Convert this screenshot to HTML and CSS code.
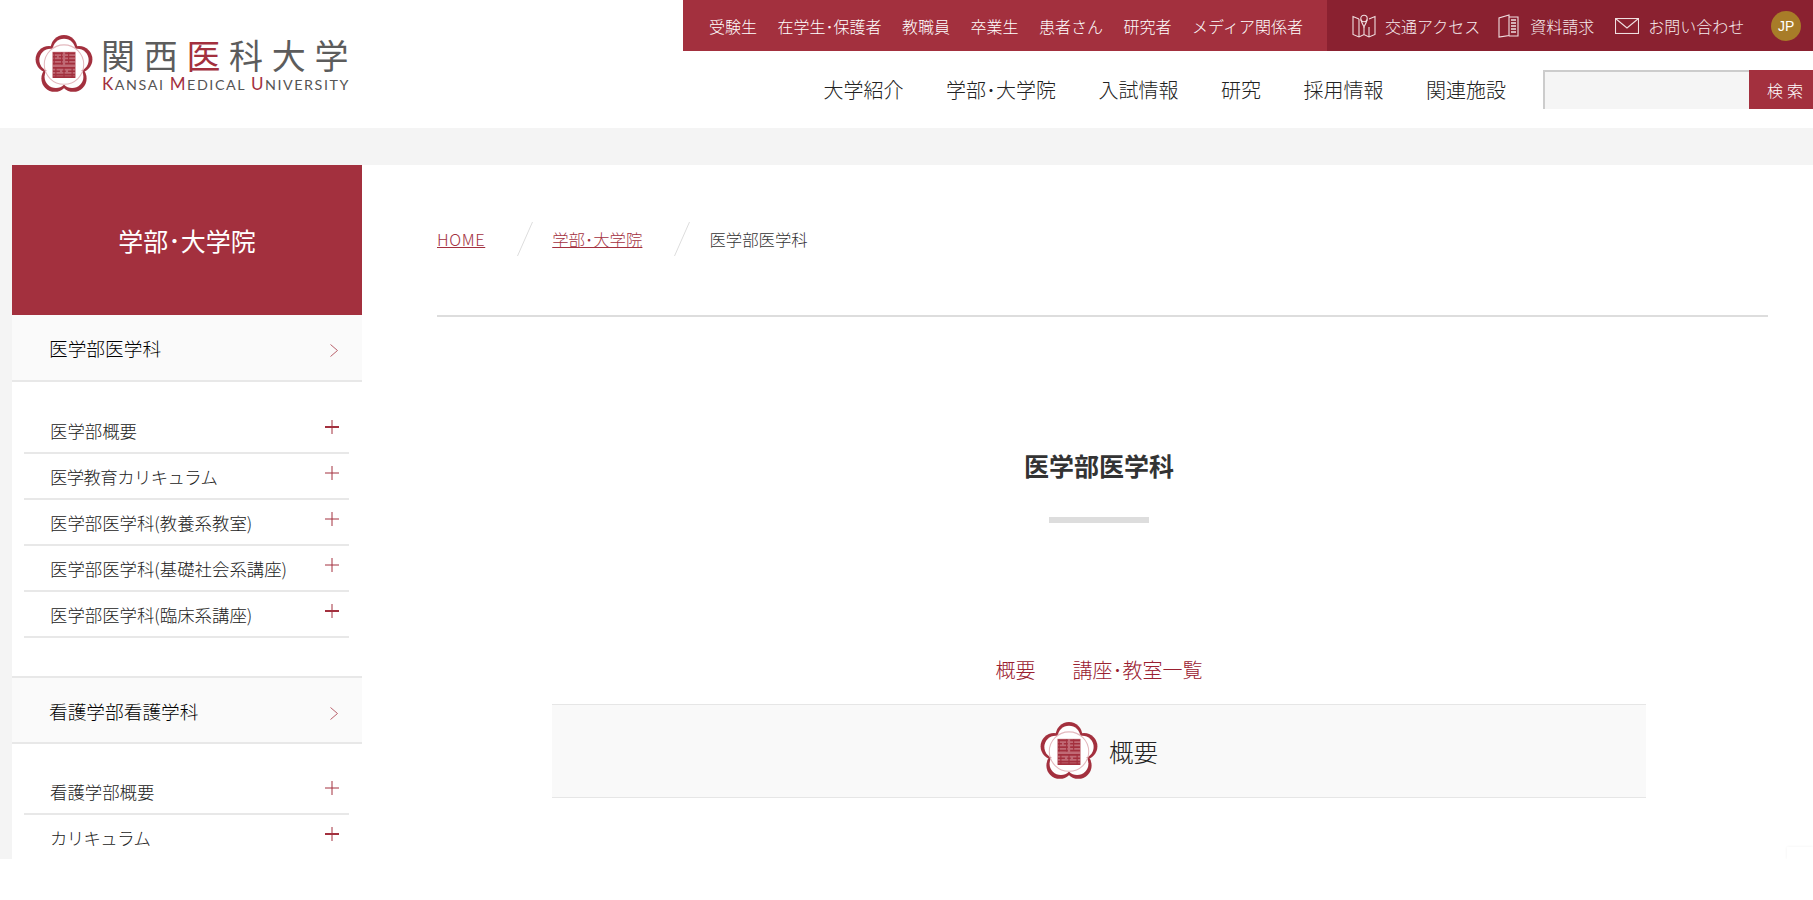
FILE: index.html
```html
<!DOCTYPE html>
<html lang="ja">
<head>
<meta charset="utf-8">
<title>医学部医学科 | 関西医科大学</title>
<link rel="stylesheet" href="styles.css">
</head>
<body>
<svg class="defs" width="0" height="0" aria-hidden="true">
  <symbol id="emblem" viewBox="0 0 100 100">
    <g fill="#a3303e">
      <circle cx="50" cy="23" r="23"/><circle cx="24" cy="42" r="23"/><circle cx="76" cy="42" r="23"/><circle cx="34" cy="75" r="23"/><circle cx="66" cy="75" r="23"/><circle cx="50" cy="50" r="30"/>
    </g>
    <g fill="#fff">
      <circle cx="50" cy="26" r="19.500"/><circle cx="27" cy="43" r="19.500"/><circle cx="73" cy="43" r="19.500"/><circle cx="36" cy="72" r="19.500"/><circle cx="64" cy="72" r="19.500"/><circle cx="50" cy="50" r="28"/>
    </g>
    <circle cx="50" cy="51" r="34" fill="none" stroke="#e3b9be" stroke-width="1.800"/>
    <rect x="30" y="29" width="40" height="45" fill="#c06a75"/>
    <path d="M31 30h17v3H31zM31 36h7v3h-7zM41 36h7v3h-7zM31 42h17v3H31zM31 48h17v3H31zM52 30h17v3H52zM52 36h17v3H52zM52 42h17v3H52zM52 48h17v3H52zM31 55h38v3H31zM31 61h12v3H31zM47 61h6v3h-6zM57 61h12v3H57zM31 67h38v3H31zM31 71h38v3H31z" fill="#a3303e"/>
    <path d="M33 30v21M46 30v21M58 30v18M36 55v19M50 55v19M64 55v19" stroke="#a3303e" stroke-width="2" fill="none"/>
  </symbol>
  <symbol id="plus" viewBox="0 0 14 14"><path d="M7 0v14M0 7h14" stroke="#a3303e" stroke-width="1" fill="none"/></symbol>
  <symbol id="plus-b" viewBox="0 0 14 14"><path d="M7 0v14" stroke="#a3303e" stroke-width="1" fill="none"/><path d="M0 7h14" stroke="#a3303e" stroke-width="2" fill="none"/></symbol>
  <symbol id="chev" viewBox="0 0 8 13"><path d="M.5.5l7 6-7 6" stroke="#b8606b" stroke-width="1" fill="none"/></symbol>
</svg>
<div class="page">
  <header class="header">
    <a class="logo" href="#">
      <svg class="logo-mark" width="58" height="58"><use href="#emblem"/></svg>
      <span class="logo-text">
        <span class="logo-ja">関西<em>医</em>科大学</span>
        <span class="logo-en"><b>K</b>ANSAI <b>M</b>EDICAL <b>U</b>NIVERSITY</span>
      </span>
    </a>
    <div class="header-right">
      <div class="topbar">
        <ul class="audience">
          <li>受験生</li><li>在学生･保護者</li><li>教職員</li><li>卒業生</li><li>患者さん</li><li>研究者</li><li>メディア関係者</li>
        </ul>
        <div class="utility">
          <span class="util-item util-map">
            <svg width="24" height="24" viewBox="0 0 24 24" fill="none" stroke="#f0dfe1" stroke-width="1.100"><path d="M7 5L1 2.500v18L7 23l5-2.500L17 23l6-2.500v-18L17 5"/><path d="M7 5v18M17 13v10M12 13v7.500"/><circle cx="12" cy="4.500" r="3.200"/><path d="M8.800 5.500c.8 3 2.200 5.500 3.200 7.500 1-2 2.400-4.500 3.200-7.500"/></svg>
            交通アクセス
          </span>
          <span class="util-item util-doc">
            <svg width="21" height="24" viewBox="0 0 21 24" fill="none" stroke="#f0dfe1" stroke-width="1.100"><path d="M11 1L1 4v19l10-1.500zM11 3h9v19h-9"/><path d="M13 6h5M13 9h5M13 12h5M13 15h5M13 18h5" stroke-width="1.400"/></svg>
            資料請求
          </span>
          <span class="util-item util-mail">
            <svg width="24" height="16" viewBox="0 0 24 16" fill="none" stroke="#f0dfe1" stroke-width="1.100"><rect x=".5" y=".5" width="23" height="15"/><path d="M.5.5L12 10 23.500.5"/></svg>
            お問い合わせ
          </span>
          <span class="lang">JP</span>
        </div>
      </div>
      <div class="mainrow">
        <nav class="gnav">
          <a href="#">大学紹介</a><a href="#">学部･大学院</a><a href="#">入試情報</a><a href="#">研究</a><a href="#">採用情報</a><a href="#">関連施設</a>
        </nav>
        <form class="search">
          <input class="search-input" type="text" aria-label="検索">
          <button class="search-btn" type="button">検索</button>
        </form>
      </div>
    </div>
  </header>

  <div class="body-wrap">
    <aside class="side">
      <h2 class="side-title">学部･大学院</h2>
      <a class="side-head" href="#">医学部医学科<svg width="8" height="13"><use href="#chev"/></svg></a>
      <ul class="side-list">
        <li>医学部概要<svg width="14" height="14"><use href="#plus-b"/></svg></li>
        <li class="kana">医学教育カリキュラム<svg width="14" height="14"><use href="#plus"/></svg></li>
        <li>医学部医学科(教養系教室)<svg width="14" height="14"><use href="#plus"/></svg></li>
        <li>医学部医学科(基礎社会系講座)<svg width="14" height="14"><use href="#plus"/></svg></li>
        <li>医学部医学科(臨床系講座)<svg width="14" height="14"><use href="#plus-b"/></svg></li>
      </ul>
      <a class="side-head" href="#">看護学部看護学科<svg width="8" height="13"><use href="#chev"/></svg></a>
      <ul class="side-list side-list-second">
        <li>看護学部概要<svg width="14" height="14"><use href="#plus"/></svg></li>
        <li>カリキュラム<svg width="14" height="14"><use href="#plus-b"/></svg></li>
      </ul>
    </aside>
    <main class="content">
      <div class="crumbs">
        <a class="crumb-home" href="#">HOME</a>
        <svg class="slash" width="16" height="34"><path d="M15.500 0L.5 34" stroke="#ddd" fill="none"/></svg>
        <a href="#">学部･大学院</a>
        <svg class="slash" width="16" height="34"><path d="M15.500 0L.5 34" stroke="#ddd" fill="none"/></svg>
        <span>医学部医学科</span>
      </div>
      <div class="inner">
        <h1 class="title">医学部医学科</h1>
        <div class="title-bar"></div>
        <div class="tabs"><a href="#">概要</a><a href="#">講座･教室一覧</a></div>
        <h2 class="section-head"><svg width="58" height="58"><use href="#emblem"/></svg>概要</h2>
      </div>
    </main>
    <div class="corner"></div>
  </div>
</div>
</body>
</html>
```

FILE: styles.css
```css
* { box-sizing: border-box; }
html, body { margin: 0; padding: 0; background: #fff; }
body {
  font-family: "Noto Sans CJK JP", "Noto Sans", sans-serif;
  font-weight: 300;
  color: #333;
  overflow: hidden;
}
a { color: inherit; text-decoration: none; }
ul { list-style: none; margin: 0; padding: 0; }
.defs { position: absolute; }
.page { height: 859px; overflow: hidden; background: #f4f4f4; }

.header { display: flex; height: 128px; background: #fff; }
.logo { display: flex; width: 683px; padding: 35px 0 0 35px; }
.logo-mark { flex: none; margin-right: 8px; }
.logo-text { display: flex; flex-direction: column; }
.logo-ja { font-size: 34px; line-height: 40px; letter-spacing: 8.700px; color: #5c5c5c; font-weight: 400; white-space: nowrap; height: 40px; }
.logo-ja em { font-style: normal; color: #a3303e; }
.logo-en { font-family: "Lato", sans-serif; font-size: 14.300px; line-height: 16px; letter-spacing: 1.560px; color: #555; white-space: nowrap; font-weight: 400; margin: 1px 0 0 1px; }
.logo-en b { font-weight: 400; color: #a3303e; font-size: 17px; }

.header-right { flex: 1; display: flex; flex-direction: column; }
.topbar { display: flex; height: 51px; background: #a3303e; color: #fff; font-size: 16px; }
.audience { display: flex; width: 644px; padding-left: 26px; gap: 20.500px; align-items: center; white-space: nowrap; }
.utility { flex: 1; display: flex; align-items: center; background: #8a2130; padding-left: 25px; white-space: nowrap; color: #f6ecee; }
.util-item { display: flex; align-items: center; }
.util-map svg { margin-right: 9px; }
.util-doc { margin-left: 18px; }
.util-doc svg { margin-right: 11px; }
.util-mail { margin-left: 21px; }
.util-mail svg { margin-right: 9px; }
.lang { width: 30px; height: 30px; border-radius: 50%; background: #a87c28; color: #fff; margin-left: 27px; font: 400 14px/30px "Liberation Sans", sans-serif; text-align: center; }

.mainrow { display: flex; padding-top: 19px; align-items: flex-start; justify-content: flex-end; }
.gnav { display: flex; gap: 42.500px; font-size: 20px; line-height: 39px; color: #222; white-space: nowrap; margin-right: 37px; }
.search { display: flex; height: 39px; margin: 0; }
.search-input { width: 206px; height: 39px; background: #f5f5f5; border: 0; border-top: 2px solid #ccc; border-left: 2px solid #ccc; padding: 0; }
.search-btn { width: 64px; height: 39px; border: 0; background: #a3303e; color: #fff; font: inherit; font-size: 16px; letter-spacing: 4px; padding: 0 0 0 18px; text-align: left; }

.body-wrap { position: relative; display: flex; margin-top: 37px; padding-left: 12px; height: 694px; }
.side { flex: none; width: 350px; background: #fff; }
.side-title { margin: 0; height: 150px; background: #a3303e; color: #fff; font-size: 25px; font-weight: 400; line-height: 150px; text-align: center; }
.side-head { display: flex; align-items: center; justify-content: space-between; height: 67px; padding: 0 24px 0 37px; background: #fafafa; border-bottom: 2px solid #e8e8e8; font-size: 18.700px; font-weight: 300; color: #000; }
.side-head svg { margin-top: 6px; }
.side-head + .side-list + .side-head { height: 68px; border-top: 2px solid #e8e8e8; }
.side-list { padding: 26px 13px 38px 12px; }
.side-list-second { padding-top: 25px; }
.side-list li { display: flex; justify-content: space-between; align-items: center; height: 46px; padding: 0 10px 0 26px; border-bottom: 2px solid #e8e8e8; font-size: 17.400px; color: #222; white-space: nowrap; }
.side-list li svg { flex: none; margin-top: -6px; }
.side-list li.kana { letter-spacing: -.6px; }
.side-list-second li:last-child { letter-spacing: -.6px; }

.content { flex: 1; background: #fff; padding: 0 45px 0 75px; }
.crumbs { display: flex; align-items: center; height: 152px; padding-bottom: 3px; border-bottom: 2px solid #ddd; font-size: 16.400px; white-space: nowrap; }
.crumbs a { color: #a3303e; text-decoration: underline; }
.crumb-home { letter-spacing: .6px; }
.slash { margin: 0 19.500px 0 31.500px; }
.inner { margin: 0 122px 0 115px; text-align: center; }
.title { margin: 129px 0 0; font-size: 25px; line-height: 38px; font-weight: 700; color: #333; }
.title-bar { width: 100px; height: 6px; margin: 33px auto 0; background: #ddd; }
.tabs { display: flex; justify-content: center; gap: 37px; margin-top: 132px; font-size: 20px; line-height: 30px; color: #9a2030; }
.section-head { display: flex; align-items: center; justify-content: center; gap: 11px; height: 94px; margin: 19px 0 0; background: #f9f9f9; border-top: 1px solid #e6e6e6; border-bottom: 1px solid #e6e6e6; font-size: 24.500px; font-weight: 300; color: #222; }
.corner { position: absolute; right: 0; bottom: 0; width: 26px; height: 12px; background: #fff; box-shadow: 0 0 3px rgba(0,0,0,.06); }
```
